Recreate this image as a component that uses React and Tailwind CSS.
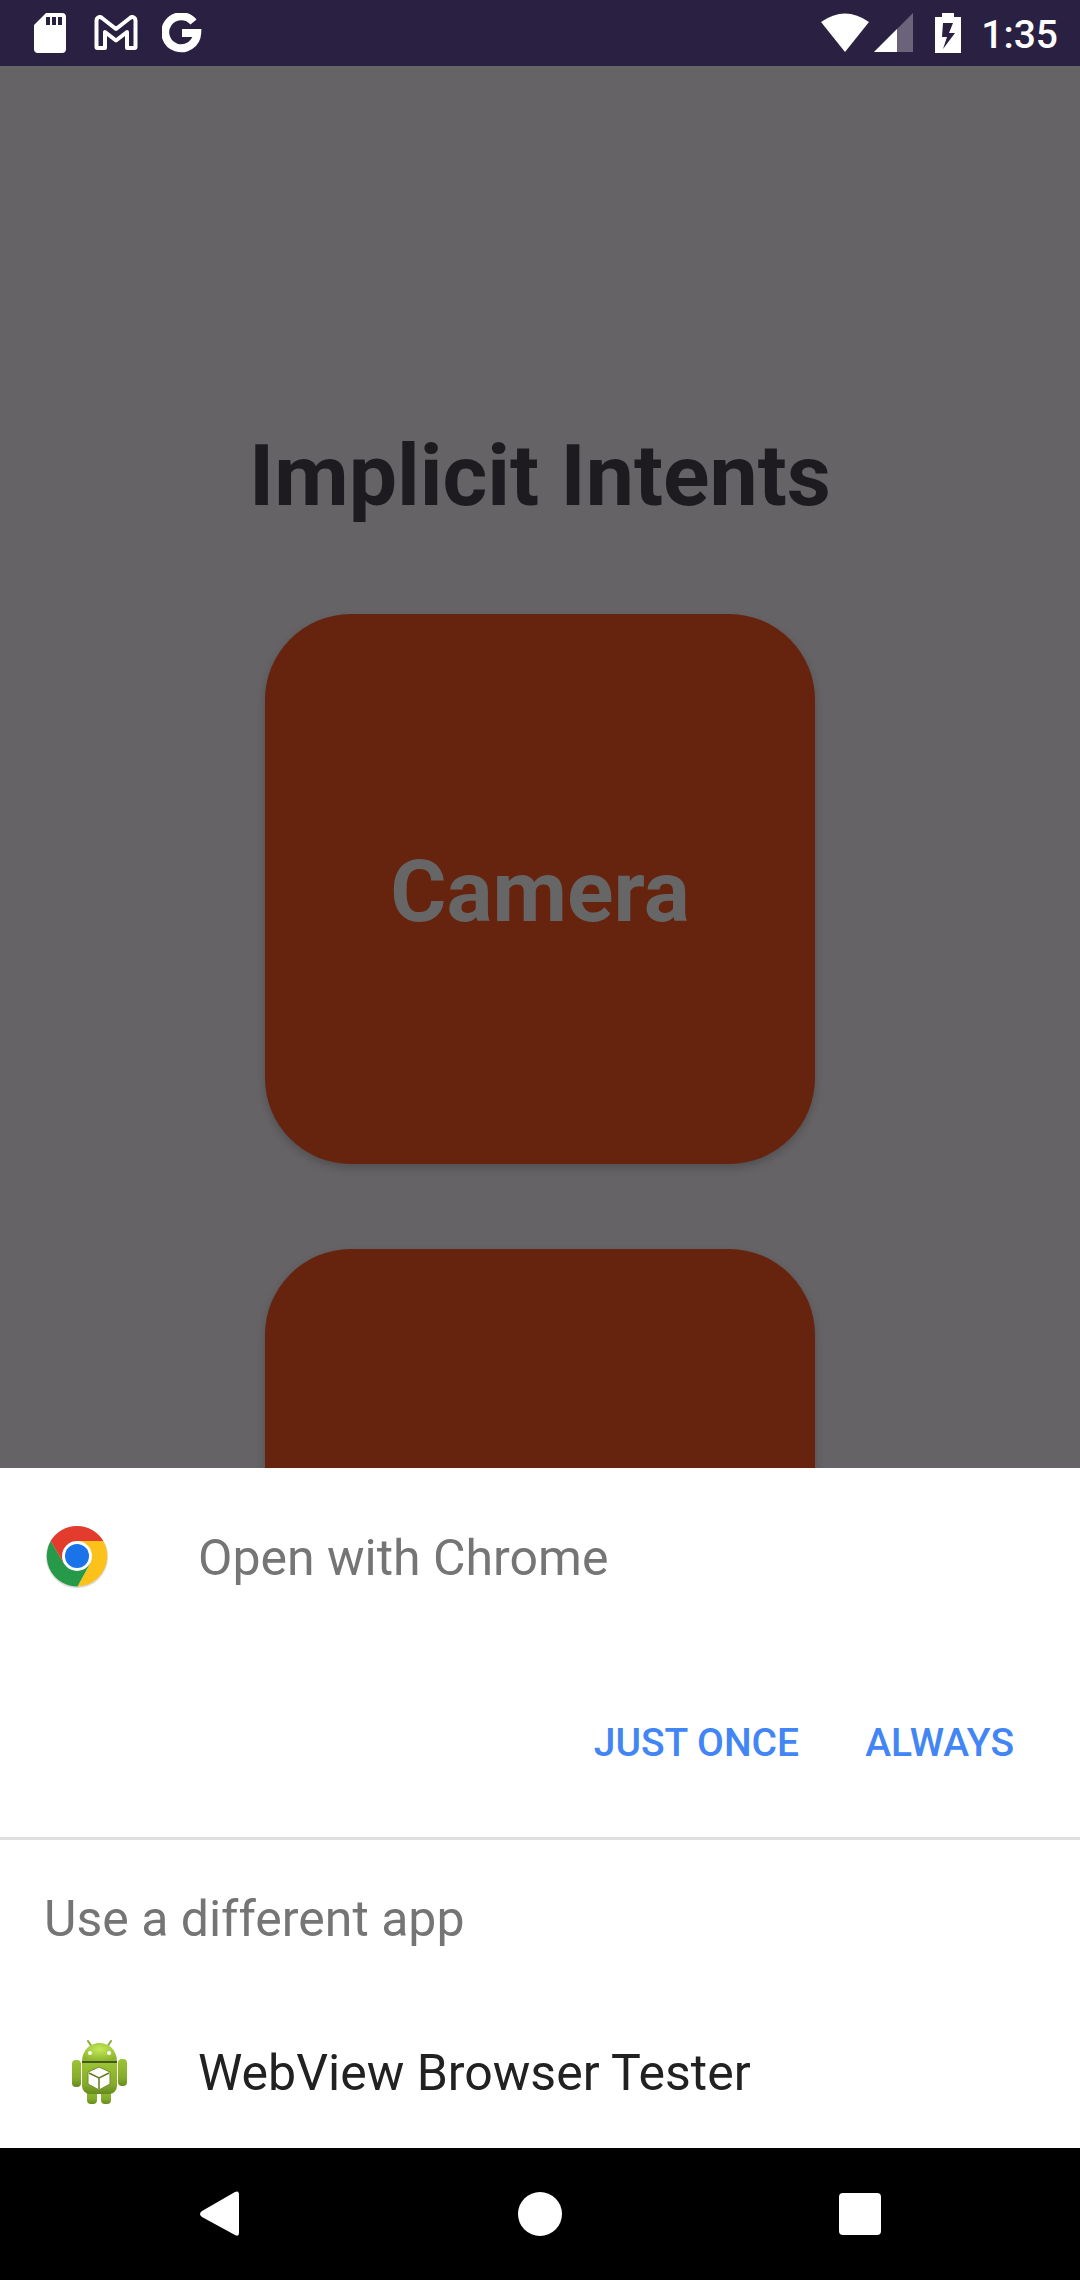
function SdCard() {
  return (
    <svg className="h-10 w-8" viewBox="0 0 32 40" fill="#fff">
      <path fillRule="evenodd" d="M12 0H28a4 4 0 0 1 4 4V36a4 4 0 0 1-4 4H4a4 4 0 0 1-4-4V12ZM12 4v8h4V4Zm6 0v8h4V4Zm6 0v8h4V4Z" />
    </svg>
  );
}

function Gmail() {
  return (
    <svg className="h-9 w-11" viewBox="0 0 44 36" fill="none" stroke="#fff" strokeWidth="4" strokeLinejoin="round">
      <path d="M2.500 32V6C2.500 2 6 1 8 3L22 14 36 3C38 1 41.500 2 41.500 6V32a1 1 0 0 1-1 1H33V17L22 25.500 11 17V33H3.500a1 1 0 0 1-1-1Z" />
    </svg>
  );
}

function Google() {
  return (
    <svg className="size-10" viewBox="0 0 40 40" fill="none" stroke="#fff" strokeWidth="8">
      <path d="M31.500 9A16 16 0 1 0 35.200 20H20" />
    </svg>
  );
}

function StatusBar() {
  return (
    <header className="flex h-[66px] items-center justify-between bg-[#2a2041] pr-[22px] pl-[34px]">
      <div className="flex items-center gap-7 pb-px">
        <SdCard />
        <Gmail />
        <div className="-ml-1"><Google /></div>
      </div>
      <div className="flex items-center">
        <svg className="h-10 w-[50px]" viewBox="0 0 50 40" fill="#fff">
          <path d="M1 9Q25-8 49 9L25 39Z" />
        </svg>
        <svg className="ml-1 size-10" viewBox="0 0 40 40" fill="#fff">
          <path d="M39 0V39H0Z" opacity=".3" />
          <path d="M23 16V39H0Z" />
        </svg>
        <svg className="ml-[21px] h-10 w-[26px]" viewBox="0 0 26 40" fill="#fff">
          <path fillRule="evenodd" d="M7 0H19V4H26V40H0V4H7ZM8 10 7 24H12L8 36 20 20H14L18 10Z" />
        </svg>
        <time className="ml-5 pt-[3px] text-[39px] leading-[48px] font-medium text-white">1:35</time>
      </div>
    </header>
  );
}

function Chrome() {
  return (
    <svg className="size-16" viewBox="-32 -32 64 64">
      <circle cy="1" r="31" fill="#000" opacity=".15" />
      <path d="M0 0-26.300-15A30.500 30.500 0 0 1 26.300-15L0-15Z" fill="#e33b2e" />
      <path d="M0-15H26.300A30.500 30.500 0 0 1 .500 30.500L13 7.500Z" fill="#fcc21b" />
      <path d="M-26.300-15A30.500 30.500 0 0 0 .500 30.500L13 7.500-13 7.500Z" fill="#269a48" />
      <path d="M-26.300-15H0V0L-13 7.500Z" fill="#e33b2e" />
      <circle r="15" fill="#fff" />
      <circle r="12" fill="#1a73e8" />
    </svg>
  );
}

function Android() {
  return (
    <svg className="h-[66px] w-14" viewBox="0 0 56 66">
      <defs>
        <linearGradient id="limb" x2="0" y2="1">
          <stop stopColor="#9cc433" />
          <stop offset=".7" stopColor="#85ab2b" />
          <stop offset="1" stopColor="#648a20" />
        </linearGradient>
        <radialGradient id="head" cx=".5" cy=".35" r=".65">
          <stop stopColor="#c3ea58" />
          <stop offset="1" stopColor="#8db52f" />
        </radialGradient>
      </defs>
      <path d="M17 1l4 6M40 1l-4 6" stroke="#8aab3a" strokeWidth="2" strokeLinecap="round" />
      <path d="M11 21C12-3 45-3 46 21Z" fill="url(#head)" />
      <circle cx="19" cy="13" r="2" fill="#fff" />
      <circle cx="38" cy="13" r="2" fill="#fff" />
      <g fill="url(#limb)">
        <rect x="1" y="20" width="9" height="27" rx="4" />
        <rect x="47" y="19" width="9" height="27" rx="4" />
        <rect x="16" y="46" width="10" height="18" rx="4" />
        <rect x="30" y="46" width="10" height="18" rx="4" />
        <path d="M11 22H46V46a8 8 0 0 1-8 8H19a8 8 0 0 1-8-8Z" />
      </g>
      <path d="M11 22H46" stroke="#42591c" strokeWidth="2" />
      <path d="M28 27 39 32V44L28 50 17 44V32Z" fill="#fff" stroke="#6f8f22" strokeWidth="1" />
      <path d="M18 33 28 38 38 33M28 38V49" fill="none" stroke="#5f7c1b" strokeWidth="1.500" />
    </svg>
  );
}

function IntentCard({ label }) {
  return (
    <button className="size-[550px] shrink-0 rounded-[86px] bg-[#66230e] pt-1 text-[86px] font-bold text-[#666] shadow-[0_4px_8px_rgba(0,0,0,0.2)]">
      {label}
    </button>
  );
}

function NavBar() {
  return (
    <nav className="grid h-[132px] grid-cols-3 place-items-center bg-black px-[60px]">
      <button aria-label="Back">
        <svg className="size-12" viewBox="0 0 48 48" fill="#fff">
          <path d="M43 5V43q0 4-4 2L6 27q-4-3 0-6L39 2q4-2 4 3Z" />
        </svg>
      </button>
      <button aria-label="Home" className="size-11 rounded-full bg-white" />
      <button aria-label="Recent apps" className="size-[42px] rounded-sm bg-white" />
    </nav>
  );
}

export default function App() {
  return (
    <div className="flex h-screen flex-col bg-[#666366] font-['Roboto',sans-serif]">
      <StatusBar />
      <main className="flex min-h-0 flex-1 flex-col items-center overflow-hidden">
        <h1 className="mt-[360px] mb-[88px] text-[86px] leading-[100px] font-bold text-[#1d1b20]">Implicit Intents</h1>
        <div className="flex flex-col gap-[85px]">
          <IntentCard label="Camera" />
          <IntentCard label="" />
        </div>
      </main>
      <section className="shrink-0 bg-white text-[50px] leading-[60px]">
        <div className="flex items-center pt-14 pl-[45px]">
          <Chrome />
          <h2 className="ml-[89px] pt-1 text-[#757575]">Open with Chrome</h2>
        </div>
        <div className="mt-[89px] flex justify-end gap-[22px] pr-11 pb-7 text-[39px] font-medium text-[#4285f4]">
          <button className="h-[132px] px-[22px]">JUST ONCE</button>
          <button className="h-[132px] px-[22px]">ALWAYS</button>
        </div>
        <div className="border-t-[3px] border-[#dfdfdf] pt-[49px] pb-[42px]">
          <h3 className="px-11 text-[#757575]">Use a different app</h3>
          <button className="mt-[91px] flex w-full items-center pl-[71px] text-[#212121]">
            <Android />
            <span className="ml-[71px]">WebView Browser Tester</span>
          </button>
        </div>
      </section>
      <NavBar />
    </div>
  );
}
